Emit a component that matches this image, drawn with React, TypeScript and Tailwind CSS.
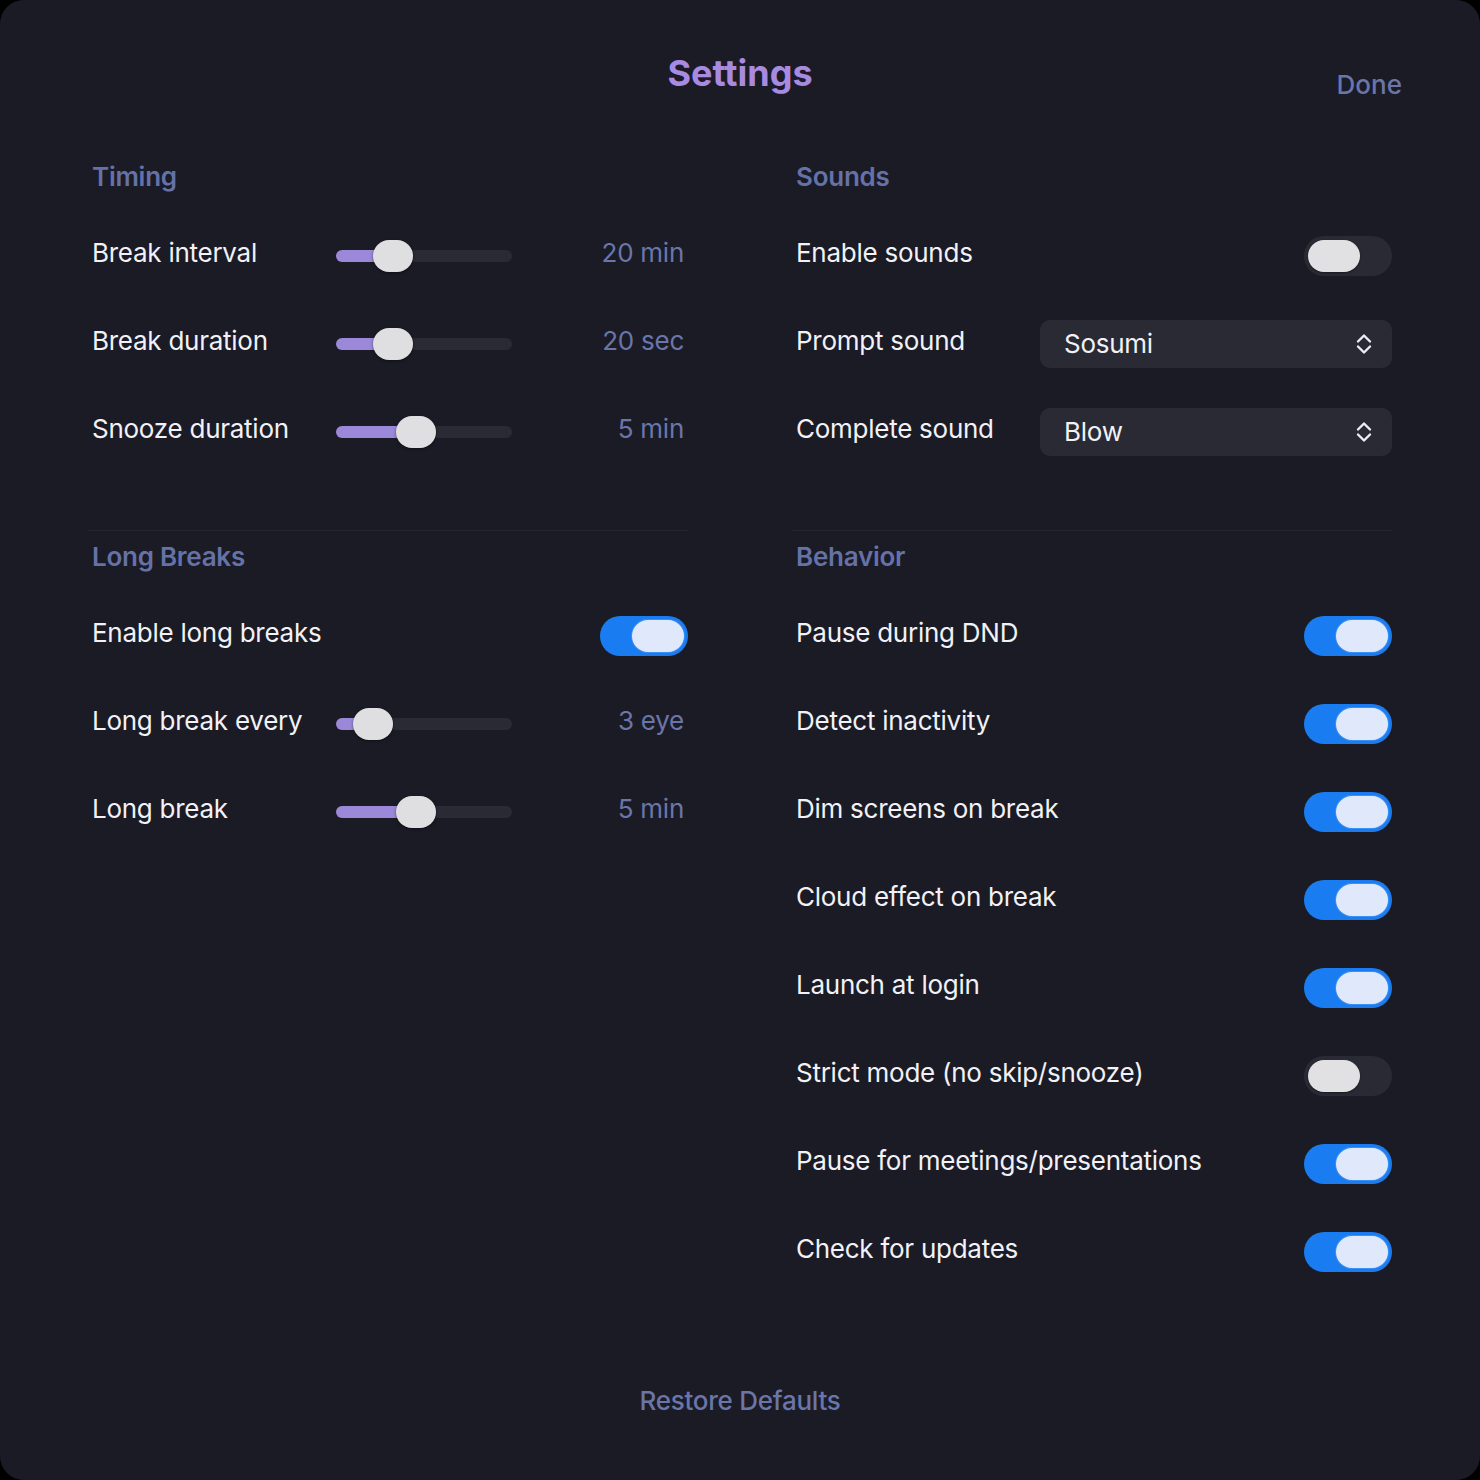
import React from "react";

type SliderRow = { label: string; value: string; pos: number };
type ToggleRow = { label: string; on: boolean };

const timing: SliderRow[] = [
  { label: "Break interval", value: "20 min", pos: 37 },
  { label: "Break duration", value: "20 sec", pos: 37 },
  { label: "Snooze duration", value: "5 min", pos: 60 },
];

const longBreaks: SliderRow[] = [
  { label: "Long break every", value: "3 eye", pos: 17 },
  { label: "Long break", value: "5 min", pos: 60 },
];

const behavior: ToggleRow[] = [
  { label: "Pause during DND", on: true },
  { label: "Detect inactivity", on: true },
  { label: "Dim screens on break", on: true },
  { label: "Cloud effect on break", on: true },
  { label: "Launch at login", on: true },
  { label: "Strict mode (no skip/snooze)", on: false },
  { label: "Pause for meetings/presentations", on: true },
  { label: "Check for updates", on: true },
];

function SectionTitle({ children }: { children: React.ReactNode }) {
  return (
    <h2 className="h-8 pl-1 text-[26px] leading-8 font-semibold tracking-[-0.01em] text-[#6572a7]">
      {children}
    </h2>
  );
}

function Label({ children }: { children: React.ReactNode }) {
  return (
    <span className="w-[248px] shrink-0 pl-1 text-[26px] leading-8 tracking-[-0.01em] text-[#f1f1f6]">
      {children}
    </span>
  );
}

function Toggle({ on }: { on: boolean }) {
  return (
    <div
      className={
        on
          ? "mt-[6px] flex h-10 w-[88px] shrink-0 items-center justify-end rounded-full bg-[#1a7cf1] p-1"
          : "mt-[6px] flex h-10 w-[88px] shrink-0 items-center justify-start rounded-full bg-[#2a2a35] p-1"
      }
    >
      <div
        className={
          on
            ? "h-8 w-[52px] rounded-full bg-[#dfe9fb] ring-1 ring-[#3d8ff0]"
            : "h-8 w-[52px] rounded-full bg-[#e1e1e3] shadow-[0_1px_2px_rgba(0,0,0,0.4)]"
        }
      />
    </div>
  );
}

function Slider({ row }: { row: SliderRow }) {
  return (
    <div className="flex h-[88px] items-center">
      <Label>{row.label}</Label>
      <div className="relative mt-[6px] h-3 w-[176px] shrink-0 rounded-full bg-[#2a2a35]">
        <div
          className="absolute inset-y-0 left-0 rounded-full bg-[#9b88d8]"
          style={{ width: row.pos + 20 }}
        />
        <div
          className="absolute top-1/2 h-8 w-10 -translate-y-1/2 rounded-full bg-[#dfdfe1] shadow-[0_1px_3px_rgba(0,0,0,0.5)]"
          style={{ left: row.pos }}
        />
      </div>
      <span className="flex-1 pr-1 text-right text-[26px] leading-8 tracking-[-0.01em] text-[#6a76a9]">
        {row.value}
      </span>
    </div>
  );
}

function Select({ value }: { value: string }) {
  return (
    <div className="mt-[6px] flex h-12 flex-1 items-center justify-between rounded-[10px] bg-[#2a2a35] pl-6 pr-5">
      <span className="text-[26px] leading-8 tracking-[-0.01em] text-[#f1f1f6]">{value}</span>
      <svg width="16" height="22" viewBox="0 0 16 22" fill="none">
        <path
          d="M2 8.5 L8 2.5 L14 8.5"
          stroke="#ececf1"
          strokeWidth="2.4"
          strokeLinecap="round"
          strokeLinejoin="round"
        />
        <path
          d="M2 13.5 L8 19.5 L14 13.5"
          stroke="#ececf1"
          strokeWidth="2.4"
          strokeLinecap="round"
          strokeLinejoin="round"
        />
      </svg>
    </div>
  );
}

export default function App() {
  return (
    <div
      className="h-[1480px] w-[1480px] bg-black"
      style={{ fontFamily: "Inter, 'Noto Sans', 'Liberation Sans', sans-serif" }}
    >
      <div className="flex h-full flex-col rounded-[24px] bg-[#1b1b26]">
        {/* header */}
        <div className="grid grid-cols-[1fr_auto_1fr] px-[78px] pt-[51px]">
          <div />
          <h1 className="text-[36px] leading-[44px] font-bold text-[#a88be0]">Settings</h1>
          <button className="mt-[18px] self-start justify-self-end text-[26px] leading-8 font-medium text-[#6a76a9]">
            Done
          </button>
        </div>

        <div className="mt-[60px] grid grid-cols-2 gap-x-[104px] px-[88px]">
          {/* Timing */}
          <section>
            <SectionTitle>Timing</SectionTitle>
            <div className="mt-4">
              {timing.map((r) => (
                <Slider key={r.label} row={r} />
              ))}
            </div>
          </section>

          {/* Sounds */}
          <section>
            <SectionTitle>Sounds</SectionTitle>
            <div className="mt-4">
              <div className="flex h-[88px] items-center">
                <Label>Enable sounds</Label>
                <div className="flex flex-1 justify-end">
                  <Toggle on={false} />
                </div>
              </div>
              <div className="flex h-[88px] items-center">
                <Label>Prompt sound</Label>
                <Select value="Sosumi" />
              </div>
              <div className="flex h-[88px] items-center">
                <Label>Complete sound</Label>
                <Select value="Blow" />
              </div>
            </div>
          </section>

          <div className="mt-[57px] h-px bg-[#262631]" />
          <div className="mt-[57px] h-px bg-[#262631]" />

          {/* Long Breaks */}
          <section className="mt-[10px]">
            <SectionTitle>Long Breaks</SectionTitle>
            <div className="mt-4">
              <div className="flex h-[88px] items-center">
                <Label>Enable long breaks</Label>
                <div className="flex flex-1 justify-end">
                  <Toggle on />
                </div>
              </div>
              {longBreaks.map((r) => (
                <Slider key={r.label} row={r} />
              ))}
            </div>
          </section>

          {/* Behavior */}
          <section className="mt-[10px]">
            <SectionTitle>Behavior</SectionTitle>
            <div className="mt-4">
              {behavior.map((r) => (
                <div key={r.label} className="flex h-[88px] items-center justify-between">
                  <span className="pl-1 text-[26px] leading-8 tracking-[-0.01em] text-[#f1f1f6]">
                    {r.label}
                  </span>
                  <Toggle on={r.on} />
                </div>
              ))}
            </div>
          </section>
        </div>

        <div className="mt-[92px] flex justify-center">
          <button className="text-[26px] leading-8 font-medium tracking-[-0.01em] text-[#6a76a9]">
            Restore Defaults
          </button>
        </div>
      </div>
    </div>
  );
}
